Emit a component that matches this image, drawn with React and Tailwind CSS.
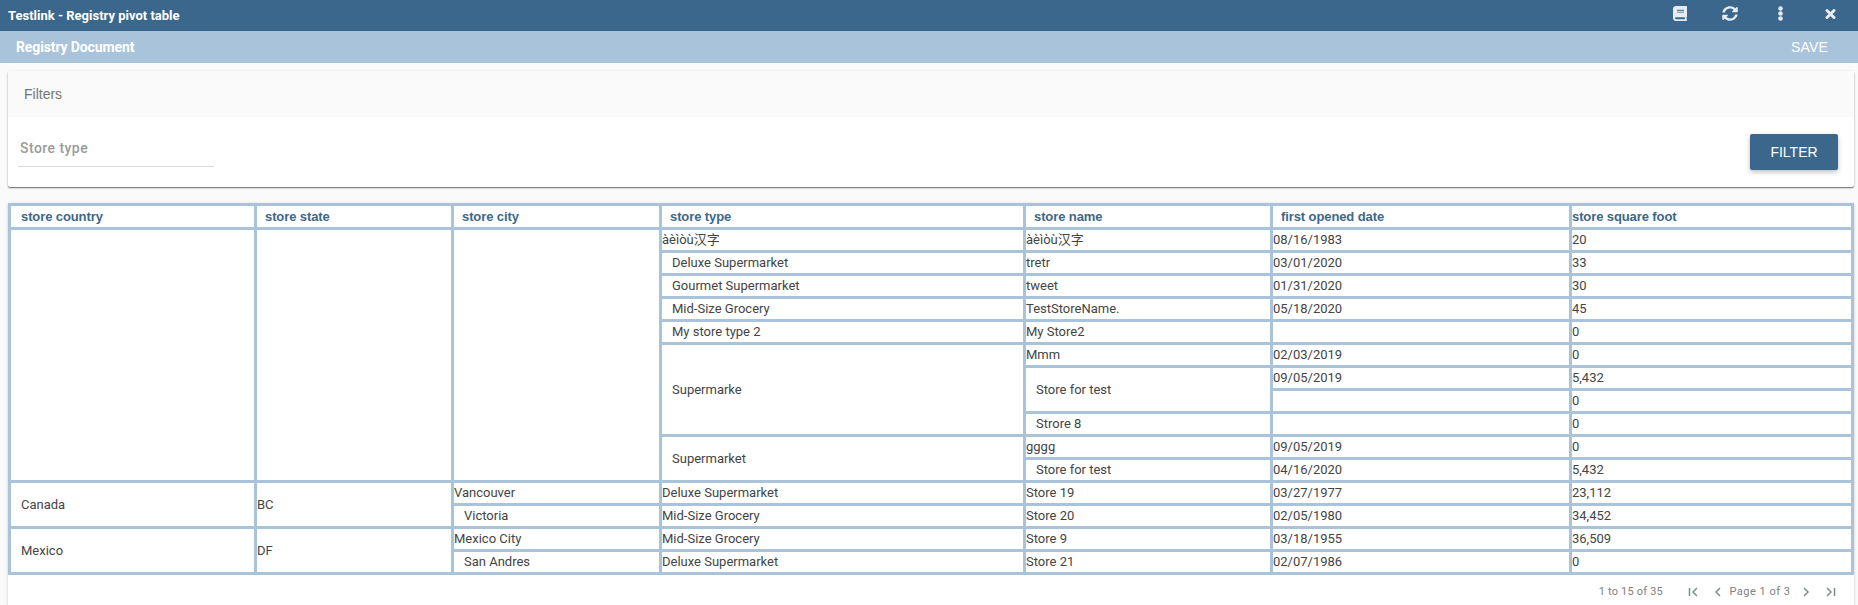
import React from "react";

const HEAD = [
  ["store country", "pl-[10px]"],
  ["store state", "pl-[8px]"],
  ["store city", "pl-[8px]"],
  ["store type", "pl-[8px]"],
  ["store name", "pl-[8px]"],
  ["first opened date", "pl-[8px]"],
  ["store square foot", "pl-0"],
];

const I = "pl-[10px]";
const N = "pl-0";
const S = {
  2: "row-span-2",
  4: "row-span-4",
  11: "row-span-11",
};

// Cells in document order: [text, row span, left padding]
const CELLS = [
  ["", 11, N], ["", 11, N], ["", 11, N], ["àèìòù汉字", 1, N], ["àèìòù汉字", 1, N], ["08/16/1983", 1, N], ["20", 1, N],
  ["Deluxe Supermarket", 1, I], ["tretr", 1, N], ["03/01/2020", 1, N], ["33", 1, N],
  ["Gourmet Supermarket", 1, I], ["tweet", 1, N], ["01/31/2020", 1, N], ["30", 1, N],
  ["Mid-Size Grocery", 1, I], ["TestStoreName.", 1, N], ["05/18/2020", 1, N], ["45", 1, N],
  ["My store type 2", 1, I], ["My Store2", 1, N], ["", 1, N], ["0", 1, N],
  ["Supermarke", 4, I], ["Mmm", 1, N], ["02/03/2019", 1, N], ["0", 1, N],
  ["Store for test", 2, I], ["09/05/2019", 1, N], ["5,432", 1, N],
  ["", 1, N], ["0", 1, N],
  ["Strore 8", 1, I], ["", 1, N], ["0", 1, N],
  ["Supermarket", 2, I], ["gggg", 1, N], ["09/05/2019", 1, N], ["0", 1, N],
  ["Store for test", 1, I], ["04/16/2020", 1, N], ["5,432", 1, N],
  ["Canada", 2, I], ["BC", 2, N], ["Vancouver", 1, N], ["Deluxe Supermarket", 1, N], ["Store 19", 1, N], ["03/27/1977", 1, N], ["23,112", 1, N],
  ["Victoria", 1, I], ["Mid-Size Grocery", 1, N], ["Store 20", 1, N], ["02/05/1980", 1, N], ["34,452", 1, N],
  ["Mexico", 2, I], ["DF", 2, N], ["Mexico City", 1, N], ["Mid-Size Grocery", 1, N], ["Store 9", 1, N], ["03/18/1955", 1, N], ["36,509", 1, N],
  ["San Andres", 1, I], ["Deluxe Supermarket", 1, N], ["Store 21", 1, N], ["02/07/1986", 1, N], ["0", 1, N],
];

function TopBar() {
  return (
    <header className="flex h-[31px] shrink-0 items-center bg-[#3b678c] pl-[8px] text-white">
      <h1 className="grow text-[13px] font-bold">Testlink - Registry pivot table</h1>
      <div className="flex h-full items-start pt-[6px] pr-[22px] text-[#e6ecf2]">
        <svg className="mr-[35px] h-[15px] w-[14px]" viewBox="0 0 448 512" preserveAspectRatio="none" fill="currentColor">
          <path d="M448 360V24c0-13.300-10.700-24-24-24H96C43 0 0 43 0 96v320c0 53 43 96 96 96h328c13.300 0 24-10.700 24-24v-16c0-7.500-3.500-14.300-8.900-18.700-4.200-15.400-4.200-59.300 0-74.700 5.400-4.300 8.900-11.100 8.900-18.600zM128 134c0-3.300 2.700-6 6-6h212c3.300 0 6 2.700 6 6v20c0 3.300-2.700 6-6 6H134c-3.300 0-6-2.700-6-6v-20zm0 64c0-3.300 2.700-6 6-6h212c3.300 0 6 2.700 6 6v20c0 3.300-2.700 6-6 6H134c-3.300 0-6-2.700-6-6v-20zm253.400 250H96c-17.700 0-32-14.300-32-32 0-17.600 14.400-32 32-32h285.400c-1.900 17.100-1.900 46.900 0 64z" />
        </svg>
        <svg className="mr-[40px] h-[15px] w-[16px]" viewBox="0 0 512 512" preserveAspectRatio="none" fill="currentColor">
          <path d="M370.720 133.280C339.458 104.008 298.888 87.962 255.848 88c-77.458.068-144.328 53.178-162.791 126.850-1.344 5.363-6.122 9.150-11.651 9.150H24.103c-7.498 0-13.194-6.807-11.807-14.176C33.933 94.924 134.813 8 256 8c66.448 0 126.791 26.136 171.315 68.685L463.030 40.970C478.149 25.851 504 36.559 504 57.941V192c0 13.255-10.745 24-24 24H345.941c-21.382 0-32.090-25.851-16.971-40.971l41.750-41.749zM32 296h134.059c21.382 0 32.090 25.851 16.971 40.971l-41.750 41.750c31.262 29.273 71.835 45.319 114.876 45.280 77.418-.070 144.315-53.144 162.787-126.849 1.344-5.363 6.122-9.150 11.651-9.150h57.304c7.498 0 13.194 6.807 11.807 14.176C478.067 417.076 377.187 504 256 504c-66.448 0-126.791-26.136-171.315-68.685L48.970 471.030C33.851 486.149 8 475.441 8 454.059V320c0-13.255 10.745-24 24-24z" />
        </svg>
        <svg className="mr-[42px] h-[15px] w-[5px]" viewBox="0 0 5 15" fill="currentColor">
          <circle cx="2.500" cy="2.500" r="2.300" />
          <circle cx="2.500" cy="7.500" r="2.300" />
          <circle cx="2.500" cy="12.500" r="2.300" />
        </svg>
        <svg className="mt-[2px] h-[12px] w-[11px]" viewBox="0 0 11 12" fill="none" stroke="currentColor" strokeWidth="3" strokeLinecap="round">
          <path d="M2 2.500 9 9.500M9 2.500 2 9.500" />
        </svg>
      </div>
    </header>
  );
}

function Filters() {
  return (
    <section className="mt-[8px] mr-[4px] ml-[8px] h-[116px] shrink-0 rounded-[2px] bg-white shadow-[0_1px_1px_0_rgba(0,0,0,0.45),0_1px_3px_0_rgba(0,0,0,0.2)]">
      <h3 className="flex h-[46px] items-center bg-[#fafafa] pl-[16px] font-['Liberation_Sans',sans-serif] text-[14px] text-[#757575]">Filters</h3>
      <div className="flex items-start justify-between pr-[16px] pl-[10px]">
        <div className="mt-[16px] flex h-[34px] w-[196px] items-center border-b border-[#dcdcdc] pb-[2px] pl-[2px] text-[14px] font-medium tracking-[0.45px] text-[#9b9b9b]">
          Store type
        </div>
        <button className="mt-[17px] h-[36px] w-[88px] rounded-[2px] bg-[#3b678c] font-['Liberation_Sans',sans-serif] text-[14px] text-white shadow-[0_2px_5px_0_rgba(0,0,0,0.26)]">
          FILTER
        </button>
      </div>
    </section>
  );
}

function PivotTable() {
  return (
    <div className="grid auto-rows-[20px] grid-cols-[243px_194px_205px_361px_244px_296px_279px] grid-rows-[21px] gap-[3px] bg-[#a9c3db] p-[3px]">
      {HEAD.map(([text, pad]) => (
        <div key={text} className={`flex items-center bg-white font-['Liberation_Sans',sans-serif] text-[13px] font-bold tracking-[-0.1px] whitespace-nowrap text-[#3b678c] ${pad}`}>
          {text}
        </div>
      ))}
      {CELLS.map(([text, span, pad], i) => (
        <div key={i} className={`flex items-center bg-white text-[13px] leading-[18px] whitespace-nowrap text-[#444] ${S[span] || ""} ${pad}`}>
          {text}
        </div>
      ))}
    </div>
  );
}

function Pager() {
  const chevron = "h-[10px] w-[11px]";
  return (
    <footer className="flex h-[34px] items-center pr-[18px] text-[11px] text-[#808080]">
      <span className="ml-auto tracking-[0.2px]">1 to 15 of 35</span>
      <div className="ml-[25px] flex items-center text-[#7f8c8d]">
        <svg className={chevron} viewBox="0 0 11 10" fill="none" stroke="currentColor" strokeWidth="1.500"><path d="M1.500 1v8M9 1 5 5l4 4" /></svg>
        <svg className="ml-[15px] h-[10px] w-[8px]" viewBox="0 0 8 10" fill="none" stroke="currentColor" strokeWidth="1.500"><path d="M6 1 2 5l4 4" /></svg>
      </div>
      <span className="mx-[7.500px] tracking-[0.5px]">Page 1 of 3</span>
      <div className="flex items-center text-[#7f8c8d]">
        <svg className="mr-[15px] ml-[4px] h-[10px] w-[8px]" viewBox="0 0 8 10" fill="none" stroke="currentColor" strokeWidth="1.500"><path d="m2 1 4 4-4 4" /></svg>
        <svg className={chevron} viewBox="0 0 11 10" fill="none" stroke="currentColor" strokeWidth="1.500"><path d="M9.500 1v8M2 1l4 4-4 4" /></svg>
      </div>
    </footer>
  );
}

export default function App() {
  return (
    <div className="flex h-[605px] w-[1858px] flex-col overflow-hidden bg-[#fafafa] font-[Roboto,'Noto_Sans_CJK_SC',sans-serif]">
      <TopBar />
      <div className="flex h-[32px] shrink-0 items-center justify-between bg-[#a9c3db] pr-[30px] pl-[16px] text-white">
        <h2 className="text-[14px] font-bold tracking-[-0.12px]">Registry Document</h2>
        <button className="font-['Liberation_Sans',sans-serif] text-[14px] tracking-[0.2px]">SAVE</button>
      </div>
      <Filters />
      <main className="mt-[16px] mr-[4px] ml-[8px] h-[440px] shrink-0 bg-white shadow-[0_1px_3px_0_rgba(0,0,0,0.2)]">
        <PivotTable />
        <Pager />
      </main>
    </div>
  );
}
